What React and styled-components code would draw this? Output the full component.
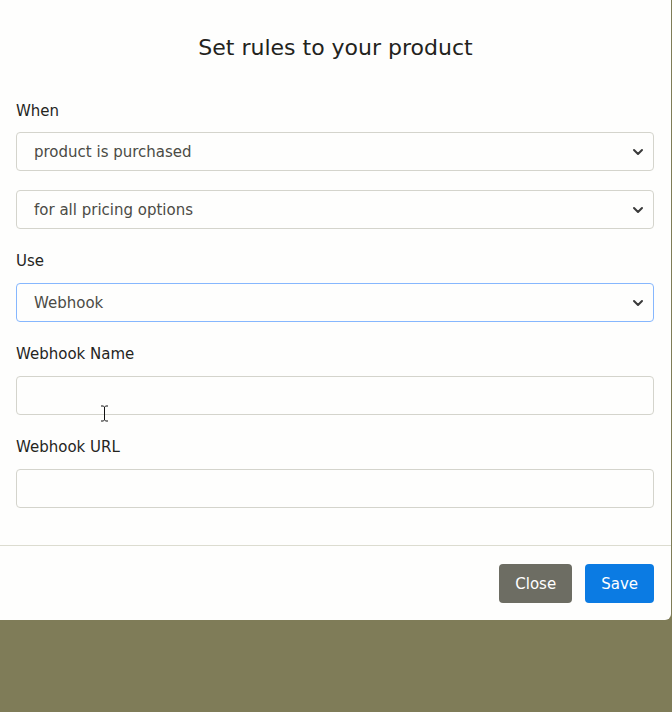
import React from "react";
import styled, { createGlobalStyle } from "styled-components";

const GlobalStyle = createGlobalStyle`
  html, body {
    margin: 0;
    padding: 0;
    background: #7f7c58;
    height: 712px;
    overflow: hidden;
  }
  body {
    font-family: "DejaVu Sans", "Noto Sans", sans-serif;
    color: #212529;
  }
`;

const Modal = styled.div`
  position: relative;
  width: 671px;
  background: #fefefd;
  border-bottom-right-radius: 6px;
  box-sizing: border-box;
`;

const Header = styled.div`
  padding: 31px 16px 0;
  text-align: center;
`;

const Title = styled.h5`
  margin: 0;
  font-size: 22px;
  line-height: 34px;
  font-weight: 400;
  color: #23231c;
`;

const Body = styled.div`
  padding: 35px 17px 37px 16px;
  display: flex;
  flex-direction: column;
  gap: 21px;
`;

const Group = styled.div`
  display: flex;
  flex-direction: column;
  gap: 19px;
`;

const Label = styled.label`
  display: block;
  padding-top: 1px;
  font-size: 15px;
  line-height: 21px;
  font-weight: 400;
  color: #25251d;
  margin-bottom: ${(p) => p.$mb ?? -8}px;
`;

const Select = styled.div`
  height: 39px;
  box-sizing: border-box;
  border: 1px solid ${(p) => (p.$focus ? "#86b7fe" : "#d4d4cc")};
  border-radius: 4px;
  display: flex;
  align-items: center;
  justify-content: space-between;
  padding: 0 9px 0 17px;
  font-size: 15px;
  color: #4b4b45;
  background: #fefefd;
`;

const Chevron = () => (
  <svg width="12" height="10" viewBox="0 0 12 10">
    <path
      d="M2 3 L6 7 L10 3"
      fill="none"
      stroke="#3a3a3a"
      strokeWidth="2"
      strokeLinecap="round"
      strokeLinejoin="round"
    />
  </svg>
);

const Input = styled.input`
  height: 39px;
  box-sizing: border-box;
  border: 1px solid #d4d4cc;
  border-radius: 4px;
  background: #fefefd;
  font-size: 15px;
  padding: 0 17px;
  outline: none;
`;

const Footer = styled.div`
  border-top: 1px solid #dcdcd0;
  padding: 18px 17px 17px;
  display: flex;
  justify-content: flex-end;
  gap: 13px;
`;

const Button = styled.button`
  height: 39px;
  padding: 0 16px;
  border: none;
  border-radius: 4px;
  font-family: inherit;
  font-size: 15px;
  font-weight: 400;
  color: #fff;
  background: ${(p) => (p.$primary ? "#0b7be3" : "#6d6d63")};
`;

const Cursor = styled.svg`
  position: absolute;
  left: 100px;
  top: 405px;
`;

function Dropdown({ value, focus }) {
  return (
    <Select $focus={focus}>
      <span>{value}</span>
      <Chevron />
    </Select>
  );
}

export default function App() {
  return (
    <>
      <GlobalStyle />
      <Modal>
        <Header>
          <Title>Set rules to your product</Title>
        </Header>
        <Body>
          <Group>
            <Label $mb={-9}>When</Label>
            <Dropdown value="product is purchased" />
            <Dropdown value="for all pricing options" />
          </Group>
          <Group>
            <Label>Use</Label>
            <Dropdown value="Webhook" focus />
          </Group>
          <Group>
            <Label>Webhook Name</Label>
            <Input type="text" />
          </Group>
          <Group>
            <Label>Webhook URL</Label>
            <Input type="text" />
          </Group>
        </Body>
        <Footer>
          <Button>Close</Button>
          <Button $primary>Save</Button>
        </Footer>
        <Cursor width="9" height="17" viewBox="0 0 9 17">
          <path
            d="M1 1 H3.5 M5.5 1 H8 M4.5 2 V15 M1 16 H3.5 M5.5 16 H8 M3.5 1.5 L4.5 2 L5.5 1.5 M3.5 15.5 L4.5 15 L5.5 15.5"
            fill="none"
            stroke="#111"
            strokeWidth="1"
          />
        </Cursor>
      </Modal>
    </>
  );
}
